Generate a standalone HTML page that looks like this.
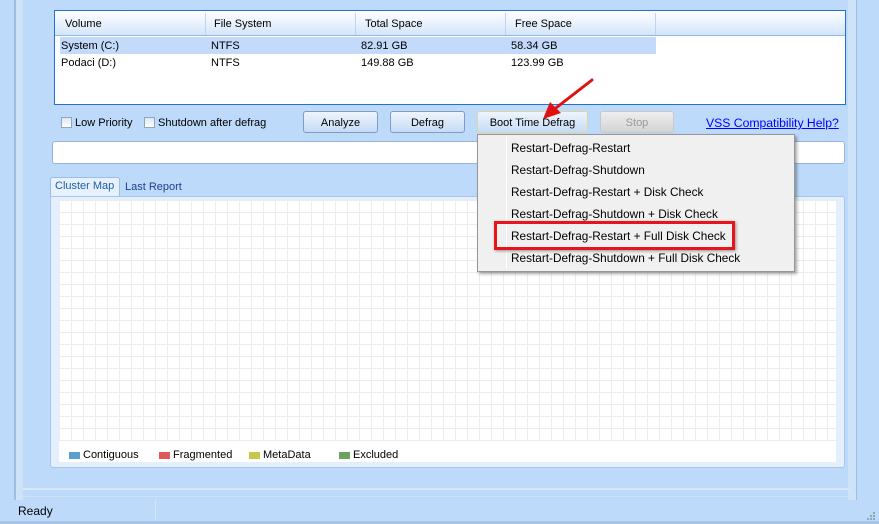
<!DOCTYPE html>
<html><head><style>
*{margin:0;padding:0;box-sizing:border-box}
body{width:879px;height:524px;background:#bedafb;font-family:"Liberation Sans",sans-serif;font-size:11px;color:#000;position:relative;overflow:hidden}
.a{position:absolute}
.btn{position:absolute;height:22px;border:1px solid #7d9dc4;border-radius:3px;background:linear-gradient(#eef5fd,#c6dcf5);text-align:center;line-height:23px;font-size:11px}
.cb{position:absolute;width:11px;height:11px;border:1px solid #8ea6c0;background:linear-gradient(#dfe7f1,#fff)}
.mi{position:absolute;left:33px;font-size:11.8px}
.lg{position:absolute;top:452px;width:11px;height:7px}
</style></head><body>
<div class="a" style="left:14px;top:0;width:2px;height:500px;background:#9fbde2"></div>
<div class="a" style="left:16px;top:0;width:7px;height:500px;background:#cfe3f8"></div>
<div class="a" style="left:848px;top:0;width:8px;height:500px;background:#cfe3f8"></div>
<div class="a" style="left:856px;top:0;width:1px;height:500px;background:#9fbde2"></div>
<div class="a" style="left:16px;top:0;width:840px;height:497px;border:1px solid #cde3fa;border-top:none;border-radius:0 0 3px 3px"></div>
<div class="a" style="left:23px;top:488px;width:826px;height:2px;background:#d8e9fb"></div>
<!-- list -->
<div class="a" style="left:54px;top:10px;width:792px;height:95px;border:1px solid #2170d4;background:#fff">
 <div class="a" style="left:0;top:0;width:790px;height:25px;background:linear-gradient(#fff,#d3e5fa);border-bottom:1px solid #8fb6e6"></div>
 <div class="a" style="left:150px;top:2px;width:1px;height:22px;background:#bcd4f0"></div>
 <div class="a" style="left:300px;top:2px;width:1px;height:22px;background:#bcd4f0"></div>
 <div class="a" style="left:450px;top:2px;width:1px;height:22px;background:#bcd4f0"></div>
 <div class="a" style="left:600px;top:2px;width:1px;height:22px;background:#bcd4f0"></div>
 <div class="a" style="left:10px;top:7px">Volume</div><div class="a" style="left:159px;top:7px">File System</div><div class="a" style="left:310px;top:7px">Total Space</div><div class="a" style="left:460px;top:7px">Free Space</div>
 <div class="a" style="left:5px;top:26px;width:596px;height:17px;background:#c3dafa"></div>
 <div class="a" style="left:6px;top:29px">System (C:)</div><div class="a" style="left:156px;top:29px">NTFS</div><div class="a" style="left:306px;top:29px">82.91 GB</div><div class="a" style="left:456px;top:29px">58.34 GB</div>
 <div class="a" style="left:6px;top:46px">Podaci (D:)</div><div class="a" style="left:156px;top:46px">NTFS</div><div class="a" style="left:306px;top:46px">149.88 GB</div><div class="a" style="left:456px;top:46px">123.99 GB</div>
</div>
<div class="cb" style="left:61px;top:117px"></div><div class="a" style="left:75px;top:117px">Low Priority</div>
<div class="cb" style="left:144px;top:117px"></div><div class="a" style="left:158px;top:117px">Shutdown after defrag</div>
<div class="btn" style="left:303px;top:111px;width:75px">Analyze</div>
<div class="btn" style="left:390px;top:111px;width:75px">Defrag</div>
<div class="btn" style="left:477px;top:111px;width:111px;border-color:#e2d49a">Boot Time Defrag</div>
<div class="btn" style="left:600px;top:111px;width:74px;background:linear-gradient(#eee,#d4d4d4);border-color:#c8c8c8;color:#999">Stop</div>
<div class="a" style="left:706px;top:116px;font-size:12.2px;color:#00f;text-decoration:underline">VSS Compatibility Help?</div>
<div class="a" style="left:52px;top:141px;width:793px;height:23px;border:1px solid #9cb4d3;border-radius:3px;background:#fff"></div>
<!-- tabs -->
<div class="a" style="left:50px;top:177px;width:70px;height:20px;border:1px solid #9cbde4;border-bottom:none;border-radius:3px 3px 0 0;background:#e6f1fd;color:#1b5fa8;padding:2px 4px">Cluster Map</div>
<div class="a" style="left:125px;top:181px;color:#1b3f8a">Last Report</div>
<div class="a" style="left:50px;top:196px;width:795px;height:272px;border:1px solid #a8c6ea;border-radius:0 3px 3px 3px;background:#e3effc"></div>
<div class="a" style="left:59px;top:200px;width:777px;height:262px;background-color:#fff;background-image:linear-gradient(90deg,#ececec 1px,transparent 1px),linear-gradient(#ececec 1px,transparent 1px);background-size:12px 12px"></div>
<div class="a" style="left:59px;top:441px;width:777px;height:21px;background:#fff"></div>
<div class="lg" style="left:69px;background:#5b9fd2"></div><div class="a" style="left:83px;top:449px">Contiguous</div>
<div class="lg" style="left:159px;background:#e05858"></div><div class="a" style="left:173px;top:449px">Fragmented</div>
<div class="lg" style="left:249px;background:#c6c84e"></div><div class="a" style="left:263px;top:449px">MetaData</div>
<div class="lg" style="left:339px;background:#6ba35e"></div><div class="a" style="left:353px;top:449px">Excluded</div>
<!-- status -->
<div class="a" style="left:155px;top:500px;width:1px;height:20px;background:#d4e5f9"></div>
<div class="a" style="left:18px;top:504px;font-size:12px">Ready</div>
<div class="a" style="left:0;top:521px;width:879px;height:3px;background:#a8c4e6"></div>
<!-- menu -->
<div class="a" style="left:477px;top:134px;width:318px;height:138px;border:1px solid #979797;background:#f0f0f0;box-shadow:2px 2px 3px rgba(0,0,0,.35)">
 <div class="a" style="left:28px;top:2px;width:1px;height:132px;background:#e0e0e0;border-right:1px solid #fff"></div>
 <div class="mi" style="top:6px">Restart-Defrag-Restart</div>
 <div class="mi" style="top:28px">Restart-Defrag-Shutdown</div>
 <div class="mi" style="top:50px">Restart-Defrag-Restart + Disk Check</div>
 <div class="mi" style="top:72px">Restart-Defrag-Shutdown + Disk Check</div>
 <div class="mi" style="top:94px">Restart-Defrag-Restart + Full Disk Check</div>
 <div class="mi" style="top:116px">Restart-Defrag-Shutdown + Full Disk Check</div>
</div>
<div class="a" style="left:494px;top:221px;width:241px;height:29px;border:3px solid #e8141a;box-shadow:1px 1px 3px rgba(0,0,0,.4)"></div>
<svg class="a" style="left:530px;top:75px" width="70" height="50"><line x1="62" y1="5" x2="22" y2="36" stroke="#e01010" stroke-width="3" stroke-linecap="round"/><polygon points="13,44 20,27 31,38" fill="#e01010"/></svg>
<svg class="a" style="left:866px;top:511px" width="10" height="10"><g fill="#8aa"><rect x="7" y="1" width="2" height="2"/><rect x="4" y="4" width="2" height="2"/><rect x="7" y="4" width="2" height="2"/><rect x="1" y="7" width="2" height="2"/><rect x="4" y="7" width="2" height="2"/><rect x="7" y="7" width="2" height="2"/></g></svg>
</body></html>
